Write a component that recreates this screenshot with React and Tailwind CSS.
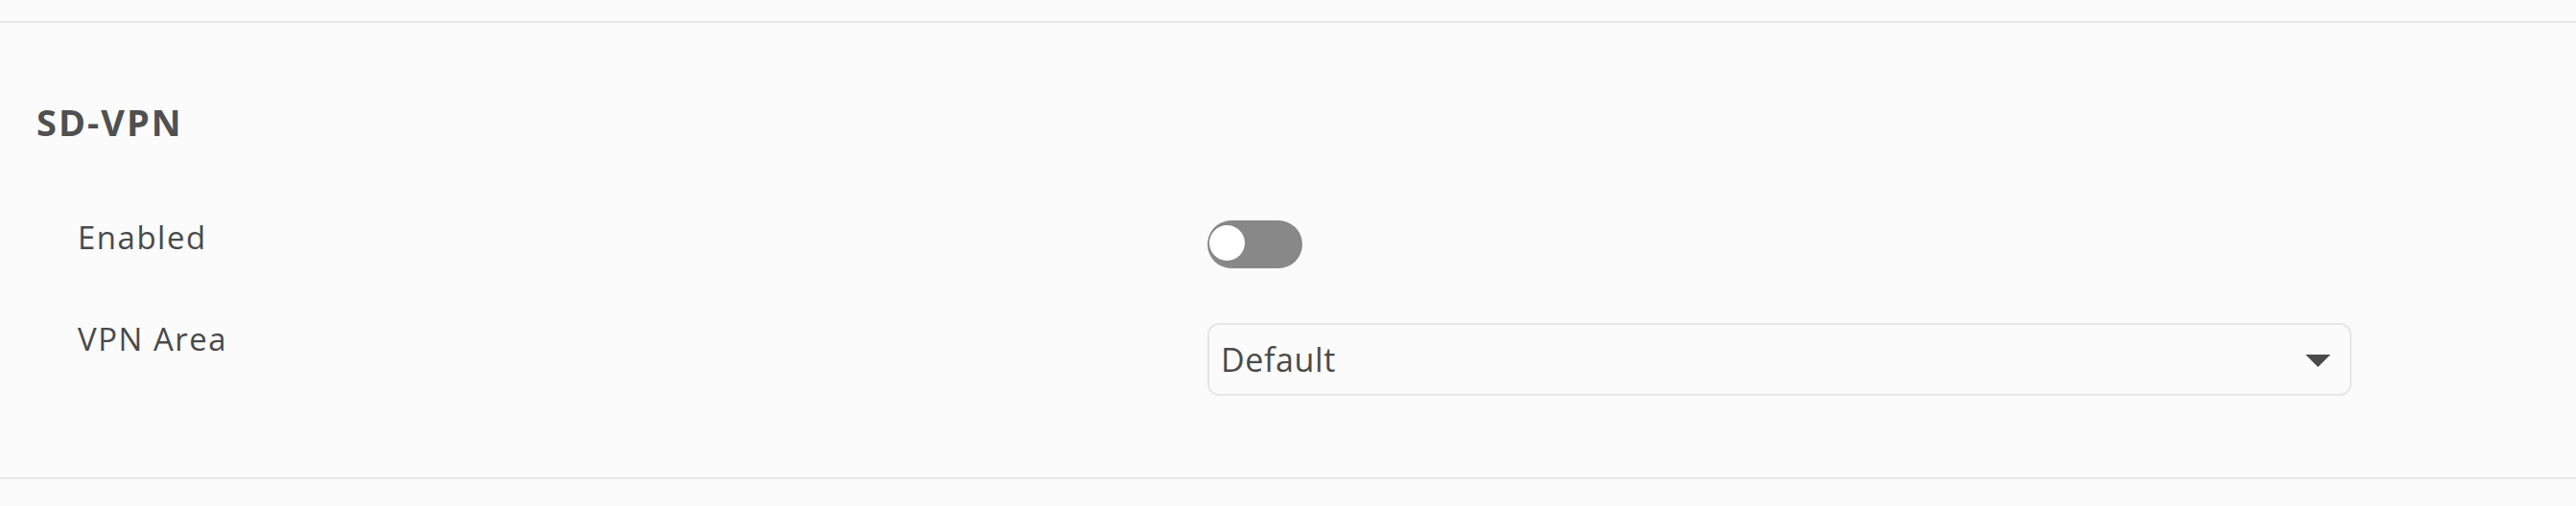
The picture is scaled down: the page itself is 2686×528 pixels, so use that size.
export default function App() {
  const font = { fontFamily: '"Open Sans", "Noto Sans", sans-serif' };
  return (
    <div className="w-full h-[528px] bg-[#fbfbfb] text-[#4a4a4a]" style={font}>
      <div className="h-[22px]" />
      <div className="border-t-2 border-[#e6e6e6]">
        <div className="pl-[38px] pt-[84px]">
          <h2 className="text-[38px] leading-[38px] font-bold tracking-[2px] text-[#505050]">SD-VPN</h2>
        </div>
        <div className="flex flex-col pt-[84px] pb-[85px]">
          <div className="flex items-start h-[50px]">
            <div className="w-[1259px] pl-[81px] text-[33px] leading-[33px] tracking-[1.5px] pt-[1px]">Enabled</div>
            <button className="w-[99px] h-[50px] rounded-full bg-[#888888] flex items-center pl-[2px] pb-[3px]">
              <span className="w-[37px] h-[37px] rounded-full bg-white block" />
            </button>
          </div>
          <div className="flex items-start mt-[57px]">
            <div className="w-[1259px] pl-[81px] text-[33px] leading-[33px] tracking-[1.5px]">VPN Area</div>
            <div className="w-[1193px] h-[76px] border-2 border-[#e6e6e6] rounded-[12px] flex items-center justify-between pl-[12px] pr-[20px]">
              <span className="text-[34px] leading-[34px] tracking-[0.6px]">Default</span>
              <svg width="26" height="13" viewBox="0 0 26 13" className="mt-[3px]"><polygon points="0,0 26,0 13,13" fill="#4a4a4a" /></svg>
            </div>
          </div>
        </div>
      </div>
      <div className="border-t-2 border-[#e6e6e6]" />
    </div>
  );
}
